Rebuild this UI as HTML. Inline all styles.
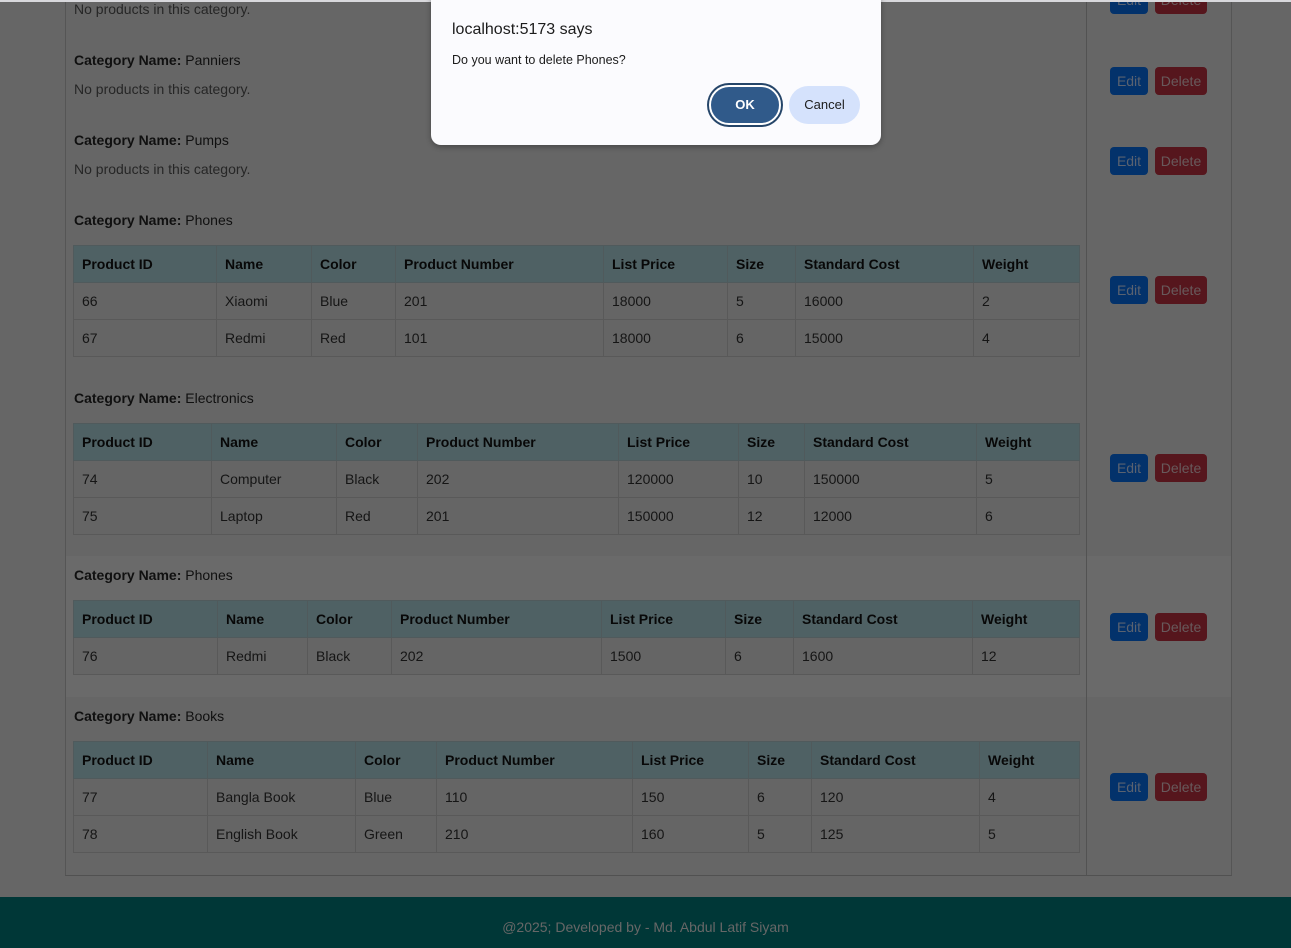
<!DOCTYPE html>
<html><head><meta charset="utf-8"><style>
*{box-sizing:border-box;margin:0;padding:0}
html,body{width:1291px;height:948px;overflow:hidden}
body{background:#666;font-family:"Liberation Sans",sans-serif;font-size:14px;color:#111;position:relative}
.topline{position:absolute;left:0;top:0;width:1291px;height:2px;background:#d8d8dc;z-index:5}
.sec{position:absolute;left:65px;width:1167px;border-bottom:1px solid #515151;border-left:1px solid #555;border-right:1px solid #555}
.sec .div{position:absolute;left:1020px;top:0;bottom:0;border-left:1px solid #525252}
.cat{position:absolute;left:8px;font-size:14px;color:#101010}
.cat b{font-weight:bold}
.np{position:absolute;left:8px;color:#262626;font-size:14px}
.btn{position:absolute;height:28px;border-radius:4px;color:#5a6270;font-size:14px;line-height:28px;text-align:center}
.edit{background:#03326b;width:38px}
.del{background:#56161d;width:52px;color:#685a5c}
table{position:absolute;left:7px;border-collapse:collapse;table-layout:fixed;width:1006px}
th,td{border:1px solid #505a5c;text-align:left;padding:0 8px;height:37px;font-size:14px}
th{background:#4f6164;color:#080808;font-weight:bold}
td{background:#656565;color:#151515;border-color:#595959}
.footer{position:absolute;left:0;top:897px;width:1291px;height:51px;background:#003737;color:#676767;font-size:14px;text-align:center;line-height:60px}
.dlg{position:absolute;left:431px;top:-10px;width:450px;height:155px;background:#fbfbfe;border-radius:10px;box-shadow:0 2px 6px rgba(0,0,0,.3);z-index:10}
.dlg .t{position:absolute;left:21px;top:31px;font-size:16px;color:#1c1c1c}
.dlg .m{position:absolute;left:21px;top:63px;font-size:12.5px;color:#1c1c1c}
.ok{position:absolute;left:278px;top:95px;width:72px;height:40px;border-radius:20px;background:#305a8a;border:2px solid #fff;box-shadow:0 0 0 2px #254569;color:#fff;font-weight:bold;font-size:13px;text-align:center;line-height:36px}
.cn{position:absolute;left:358px;top:96px;width:71px;height:38px;border-radius:19px;background:#d5e2fc;color:#1c1c1c;font-size:13px;text-align:center;line-height:38px}
</style></head><body>
<div class="topline"></div>

<div class="sec" style="top:-40px;height:82px;background:#666"><div class="div"></div>
<div class="np" style="top:41px">No products in this category.</div>
<div class="btn edit" style="left:1044px;top:26px">Edit</div><div class="btn del" style="left:1089px;top:26px">Delete</div></div>

<div class="sec" style="top:41px;height:81px;background:#666"><div class="div"></div>
<div class="cat" style="top:11px"><b>Category Name:</b> Panniers</div>
<div class="np" style="top:40px">No products in this category.</div>
<div class="btn edit" style="left:1044px;top:26px">Edit</div><div class="btn del" style="left:1089px;top:26px">Delete</div></div>

<div class="sec" style="top:121px;height:81px;background:#666"><div class="div"></div>
<div class="cat" style="top:11px"><b>Category Name:</b> Pumps</div>
<div class="np" style="top:40px">No products in this category.</div>
<div class="btn edit" style="left:1044px;top:26px">Edit</div><div class="btn del" style="left:1089px;top:26px">Delete</div></div>

<div class="sec" style="top:201px;height:179px;background:#666"><div class="div"></div>
<div class="cat" style="top:11px"><b>Category Name:</b> Phones</div>
<table style="top:44px"><colgroup><col style="width:143px"><col style="width:95px"><col style="width:84px"><col style="width:208px"><col style="width:124px"><col style="width:68px"><col style="width:178px"><col style="width:106px"></colgroup>
<tr><th>Product ID</th><th>Name</th><th>Color</th><th>Product Number</th><th>List Price</th><th>Size</th><th>Standard Cost</th><th>Weight</th></tr>
<tr><td>66</td><td>Xiaomi</td><td>Blue</td><td>201</td><td>18000</td><td>5</td><td>16000</td><td>2</td></tr>
<tr><td>67</td><td>Redmi</td><td>Red</td><td>101</td><td>18000</td><td>6</td><td>15000</td><td>4</td></tr></table>
<div class="btn edit" style="left:1044px;top:75px">Edit</div><div class="btn del" style="left:1089px;top:75px">Delete</div></div>

<div class="sec" style="top:379px;height:178px;background:#666"><div class="div"></div>
<div class="cat" style="top:11px"><b>Category Name:</b> Electronics</div>
<table style="top:44px"><colgroup><col style="width:138px"><col style="width:125px"><col style="width:81px"><col style="width:201px"><col style="width:120px"><col style="width:66px"><col style="width:172px"><col style="width:103px"></colgroup>
<tr><th>Product ID</th><th>Name</th><th>Color</th><th>Product Number</th><th>List Price</th><th>Size</th><th>Standard Cost</th><th>Weight</th></tr>
<tr><td>74</td><td>Computer</td><td>Black</td><td>202</td><td>120000</td><td>10</td><td>150000</td><td>5</td></tr>
<tr><td>75</td><td>Laptop</td><td>Red</td><td>201</td><td>150000</td><td>12</td><td>12000</td><td>6</td></tr></table>
<div class="btn edit" style="left:1044px;top:75px">Edit</div><div class="btn del" style="left:1089px;top:75px">Delete</div></div>

<div class="sec" style="top:556px;height:142px;background:#6a6a6a"><div class="div"></div>
<div class="cat" style="top:11px"><b>Category Name:</b> Phones</div>
<table style="top:44px"><colgroup><col style="width:144px"><col style="width:90px"><col style="width:84px"><col style="width:210px"><col style="width:124px"><col style="width:68px"><col style="width:179px"><col style="width:107px"></colgroup>
<tr><th>Product ID</th><th>Name</th><th>Color</th><th>Product Number</th><th>List Price</th><th>Size</th><th>Standard Cost</th><th>Weight</th></tr>
<tr><td>76</td><td>Redmi</td><td>Black</td><td>202</td><td>1500</td><td>6</td><td>1600</td><td>12</td></tr></table>
<div class="btn edit" style="left:1044px;top:57px">Edit</div><div class="btn del" style="left:1089px;top:57px">Delete</div></div>

<div class="sec" style="top:697px;height:179px;background:#666"><div class="div"></div>
<div class="cat" style="top:11px"><b>Category Name:</b> Books</div>
<table style="top:44px"><colgroup><col style="width:134px"><col style="width:148px"><col style="width:81px"><col style="width:196px"><col style="width:116px"><col style="width:63px"><col style="width:168px"><col style="width:100px"></colgroup>
<tr><th>Product ID</th><th>Name</th><th>Color</th><th>Product Number</th><th>List Price</th><th>Size</th><th>Standard Cost</th><th>Weight</th></tr>
<tr><td>77</td><td>Bangla Book</td><td>Blue</td><td>110</td><td>150</td><td>6</td><td>120</td><td>4</td></tr>
<tr><td>78</td><td>English Book</td><td>Green</td><td>210</td><td>160</td><td>5</td><td>125</td><td>5</td></tr></table>
<div class="btn edit" style="left:1044px;top:76px">Edit</div><div class="btn del" style="left:1089px;top:76px">Delete</div></div>

<div class="footer">@2025; Developed by - Md. Abdul Latif Siyam</div>

<div class="dlg">
<div class="t">localhost:5173 says</div>
<div class="m">Do you want to delete Phones?</div>
<div class="ok">OK</div>
<div class="cn">Cancel</div>
</div>
</body></html>
